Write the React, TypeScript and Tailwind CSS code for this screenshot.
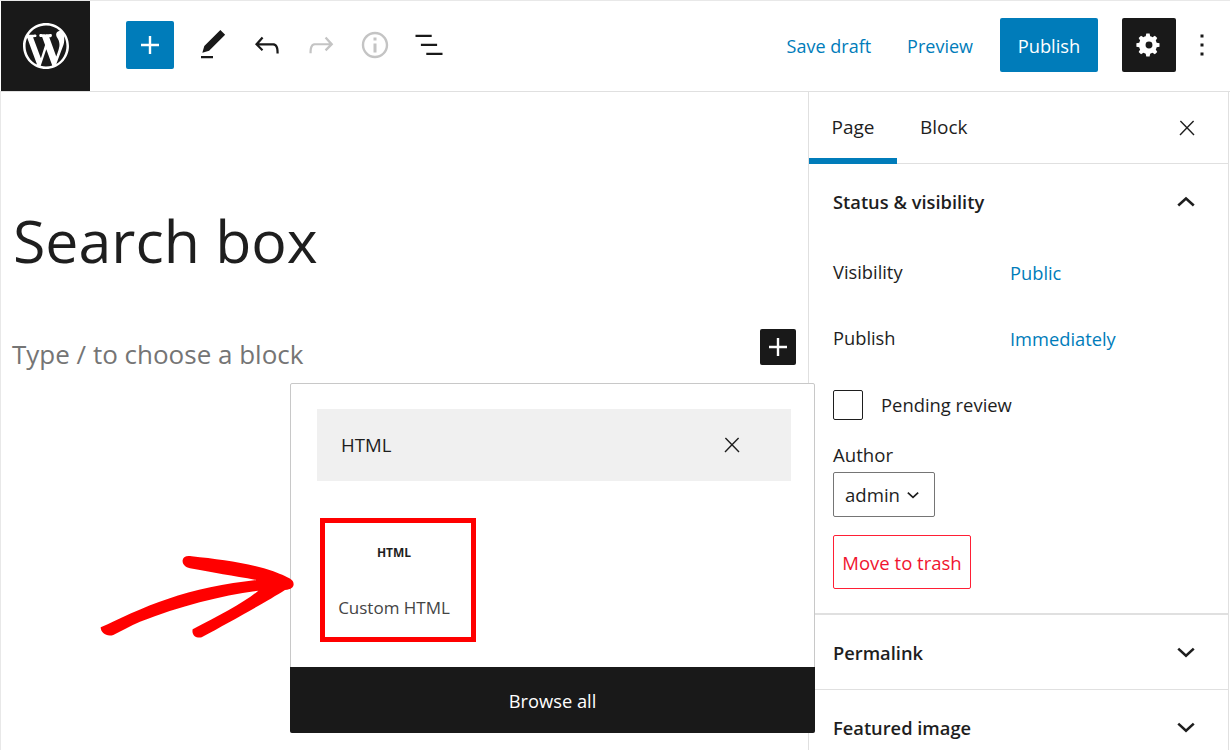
const font = { fontFamily: '"Open Sans", "Noto Sans", sans-serif' };

const Icon = ({ d, className }: { d: string; className?: string }) => (
  <svg viewBox="0 0 24 24" className={className} fill="currentColor">
    <path d={d} />
  </svg>
);

const icons = {
  plus: "M18 11.2h-5.2V6h-1.6v5.2H6v1.6h5.2V18h1.6v-5.2H18z",
  pencil: "M20.1 5.1L16.9 2 6.2 12.7l-1.3 4.4 4.5-1.3L20.1 5.1zM4 20.8h8v-1.5H4v1.5z",
  undo: "M18.3 11.7c-.6-.6-1.4-.9-2.3-.9H6.7l2.9-3.3-1.1-1-4.5 5L8.5 16l1-1-2.7-2.7H16c.5 0 .9.2 1.3.5 1 1 1 3.4 1 4.5v.3h1.5v-.2c0-1.5 0-4.3-1.5-5.7z",
  redo: "M15.6 6.5l-1.1 1 2.9 3.3H8c-.9 0-1.7.3-2.3.9-1.4 1.5-1.4 4.2-1.4 5.6v.2h1.5v-.3c0-1.1 0-3.5 1-4.5.3-.3.7-.5 1.3-.5h9.2L14.5 15l1.1 1.1 4.6-4.6-4.6-5z",
  info: "M12 3.2c-4.8 0-8.8 3.9-8.8 8.8 0 4.8 3.9 8.8 8.8 8.8 4.8 0 8.8-3.9 8.8-8.8 0-4.8-4-8.8-8.8-8.8zm0 16c-4 0-7.2-3.3-7.2-7.2C4.8 8 8 4.8 12 4.8s7.2 3.3 7.2 7.2c0 4-3.2 7.2-7.2 7.2zM11 17h2v-6h-2v6zm0-8h2V7h-2v2z",
  list: "M13.8 5.2H3v1.5h10.8V5.2zm-3.6 12v1.5H21v-1.5H10.2zm7.2-6H6.6v1.5h10.8v-1.5z",
  more: "M13 19h-2v-2h2v2zm0-6h-2v-2h2v2zm0-6h-2V5h2v2z",
  close: "M13 11.8l6.1-6.3-1-1-6.1 6.2-6.1-6.3-1 1 6.1 6.3-6.5 6.7 1 1 6.5-6.6 6.5 6.6 1-1z",
  down: "M17.5 8.5L12 13.5l-5.5-5-1.4 1.5 6.9 6.3 6.9-6.3z",
  up: "M6.5 15.5l5.5-5 5.5 5 1.4-1.5L12 7.7 5.1 14z",
};

const WpLogo = () => (
  <svg viewBox="0 0 20 20" className="size-[46px]" fill="currentColor">
    <path d="M20 10c0-5.51-4.49-10-10-10C4.48 0 0 4.49 0 10c0 5.52 4.48 10 10 10 5.51 0 10-4.48 10-10zM7.78 15.37L4.37 6.22c.55-.02 1.17-.08 1.17-.08.5-.06.44-1.13-.06-1.11 0 0-1.45.11-2.37.11-.18 0-.37 0-.58-.01C4.12 2.69 6.87 1.11 10 1.11c2.33 0 4.45.87 6.05 2.34-.68-.11-1.65.39-1.65 1.58 0 .74.45 1.36.9 2.1.35.61.55 1.36.55 2.46 0 1.49-1.4 5-1.4 5l-3.03-8.37c.54-.02.82-.17.82-.17.5-.05.44-1.25-.06-1.22 0 0-1.44.12-2.38.12-.87 0-2.33-.12-2.33-.12-.5-.03-.56 1.2-.06 1.22l.92.08 1.26 3.41zM17.41 10c.24-.64.74-1.87.43-4.25.7 1.29 1.05 2.71 1.05 4.25 0 3.29-1.73 6.24-4.4 7.78.97-2.59 1.94-5.2 2.92-7.78zM6.1 18.09C3.12 16.65 1.11 13.53 1.11 10c0-1.3.23-2.48.72-3.59C3.25 10.3 4.67 14.2 6.1 18.09zm4.03-6.63l2.58 6.98c-.86.29-1.76.45-2.71.45-.79 0-1.57-.11-2.29-.33.81-2.38 1.62-4.74 2.42-7.1z" />
  </svg>
);

const Gear = () => (
  <svg viewBox="0 0 24 24" className="size-9" fill="currentColor">
    <path
      fillRule="evenodd"
      d="M19 13.1v-2.2l-1.9-.4c-.1-.5-.3-1-.6-1.5l1-1.6-1.6-1.6-1.6 1c-.5-.3-1-.5-1.5-.6l-.4-1.9h-2.2l-.4 1.9c-.5.1-1 .3-1.5.6l-1.6-1-1.6 1.6 1 1.6c-.3.5-.5 1-.6 1.5l-1.9.4v2.2l1.9.4c.1.5.3 1 .6 1.5l-1 1.6 1.6 1.6 1.6-1c.5.3 1 .5 1.5.6l.4 1.9h2.2l.4-1.9c.5-.1 1-.3 1.5-.6l1.6 1 1.6-1.6-1-1.6c.3-.5.5-1 .6-1.5l1.9-.4zM12 14.3a2.3 2.3 0 1 1 0-4.6 2.3 2.3 0 0 1 0 4.6z"
    />
  </svg>
);

const Header = () => (
  <div className="flex h-[92px] shrink-0 items-center border-t border-b border-t-[#e8e8e8] border-b-[#e0e0e0] pr-[10px] pb-[2px] pl-px">
    <div className="flex h-[90px] w-[89px] shrink-0 items-center justify-center self-start bg-[#191919] text-white">
      <WpLogo />
    </div>
    <div className="ml-9 flex size-12 items-center justify-center rounded-[2px] bg-[#007cba] text-white">
      <Icon d={icons.plus} className="size-9" />
    </div>
    <div className="ml-[21px] flex items-center gap-[18px] text-[#191919]">
      <Icon d={icons.pencil} className="size-9" />
      <Icon d={icons.undo} className="size-9" />
      <Icon d={icons.redo} className="size-9 text-[#c4c4c4]" />
      <Icon d={icons.info} className="size-9 text-[#c4c4c4]" />
      <Icon d={icons.list} className="size-9" />
    </div>
    <div className="ml-auto flex items-center pt-[2px] text-[18px] text-[#007cba]">
      <span>Save draft</span>
      <span className="ml-9">Preview</span>
    </div>
    <div className="ml-[27px] flex h-[54px] w-[98px] items-center justify-center rounded-[2px] bg-[#007cba] pt-px text-[18.3px] text-white">
      Publish
    </div>
    <div className="ml-6 flex size-[54px] items-center justify-center rounded-[2px] bg-[#191919] text-white">
      <Gear />
    </div>
    <Icon d={icons.more} className="ml-[8px] size-9 text-[#191919]" />
  </div>
);

const Row = ({ label, value }: { label: string; value: string }) => (
  <div className="flex h-[66px] items-center text-[18.3px]">
    <span className="mb-[2px] w-[177px] text-[#1e1e1e]">{label}</span>
    <span className="text-[#007cba]">{value}</span>
  </div>
);

const CollapsedPanel = ({ title }: { title: string }) => (
  <div className="flex h-[75px] shrink-0 items-center justify-between border-b border-[#e0e0e0] pr-[27px] pl-6">
    <span className="pt-[1px] text-[18.3px] font-semibold text-[#1e1e1e]">{title}</span>
    <Icon d={icons.down} className="size-[30px] text-[#1e1e1e]" />
  </div>
);

const Sidebar = () => (
  <div className="flex w-[421px] shrink-0 flex-col border-x border-[#e0e0e0]">
    <div className="flex h-[72px] shrink-0 items-center border-b border-[#e0e0e0]">
      <div className="relative flex h-full w-[88px] items-center justify-center text-[19px] text-[#1e1e1e]">
        Page
        <div className="absolute right-0 -bottom-px left-0 h-[6px] bg-[#007cba]" />
      </div>
      <span className="ml-[23px] text-[19px] text-[#1e1e1e]">Block</span>
      <Icon d={icons.close} className="mr-[29px] ml-auto size-6 text-[#1e1e1e]" />
    </div>
    <div className="h-[451px] shrink-0 border-b-2 border-[#e0e0e0] px-6">
      <div className="flex h-[76px] items-center justify-between pr-[3px]">
        <span className="text-[18.3px] font-semibold text-[#1e1e1e]">Status &amp; visibility</span>
        <Icon d={icons.up} className="size-[30px] text-[#1e1e1e]" />
      </div>
      <Row label="Visibility" value="Public" />
      <Row label="Publish" value="Immediately" />
      <div className="flex h-[66px] items-center text-[18.4px] text-[#1e1e1e]">
        <div className="mr-[18px] size-[30px] rounded-[2px] border border-[#1e1e1e]" />
        Pending review
      </div>
      <div className="mt-[4px] text-[18.6px] leading-[26px] text-[#1e1e1e]">Author</div>
      <div className="mt-[4px] flex h-[45px] w-[102px] items-center rounded-[2px] border border-[#757575] pl-[11px] text-[18.6px] text-[#1e1e1e]">
        admin
        <Icon d={icons.down} className="ml-[3px] size-[20px]" />
      </div>
      <div className="mt-[18px] flex h-[54px] w-[138px] items-center justify-center rounded-[2px] border border-[#ff1f35] pt-px text-[18.5px] text-[#f0142f]">
        Move to trash
      </div>
    </div>
    <CollapsedPanel title="Permalink" />
    <CollapsedPanel title="Featured image" />
  </div>
);

const Arrow = () => (
  <svg viewBox="0 0 690 450" className="absolute top-[500px] left-[80px] h-[150px] w-[230px]" fill="#ff0000">
    <path d="M308 180C310 170 320 166 335 169C420 178 510 190 580 214C605 224 628 232 638 243C645 255 640 268 615 270C560 305 450 365 365 412C348 416 334 404 338 388C420 345 490 310 535 272C430 285 300 318 180 365C150 378 125 392 100 405C80 412 62 398 62 382C110 360 190 320 265 296C340 270 440 250 530 240C460 228 400 218 330 205C315 202 306 192 308 180Z" />
  </svg>
);

const Popover = () => (
  <div className="absolute top-[383px] left-[290px] flex h-[350px] w-[525px] flex-col rounded-[2px] border border-[#c8c8c8] bg-white">
    <div className="mt-[25px] ml-[26px] flex h-[72px] w-[474px] items-center justify-between bg-[#f0f0f0] pr-[47px] pl-6 text-[18.6px] text-[#1e1e1e]">
      HTML
      <Icon d={icons.close} className="size-6" />
    </div>
    <div className="mt-[37px] ml-[29px] flex h-[124px] w-[156px] flex-col items-center border-[5px] border-[#ff0000] pr-[8px] text-[#1e1e1e]">
      <span className="mt-[21px] text-[12px] font-bold leading-[18px]">HTML</span>
      <span className="mt-[34px] text-[17px] leading-[24px] text-[#444]">Custom HTML</span>
    </div>
    <div className="-mx-px -mb-px mt-auto flex h-[66px] items-center justify-center rounded-b-[2px] bg-[#191919] pt-px text-[18.3px] font-medium text-white">
      Browse all
    </div>
  </div>
);

export default function App() {
  return (
    <div style={font} className="relative flex h-[750px] w-[1230px] flex-col overflow-hidden bg-white">
      <Header />
      <div className="flex min-h-0 flex-1">
        <div className="w-[808px] shrink-0 border-l border-[#e8e8e8] pl-[11px]">
          <h1 className="mt-[108px] ml-px text-[59px] leading-[80px] text-[#1e1e1e]">Search box</h1>
          <div className="mt-[49px] flex items-start justify-between pr-[12px]">
            <span className="mt-[7px] text-[26px] leading-[36px] text-[#757575]">Type / to choose a block</span>
            <div className="flex size-9 items-center justify-center rounded-[2px] bg-[#191919] text-white">
              <Icon d={icons.plus} className="size-9" />
            </div>
          </div>
        </div>
        <Sidebar />
      </div>
      <Popover />
      <Arrow />
    </div>
  );
}
